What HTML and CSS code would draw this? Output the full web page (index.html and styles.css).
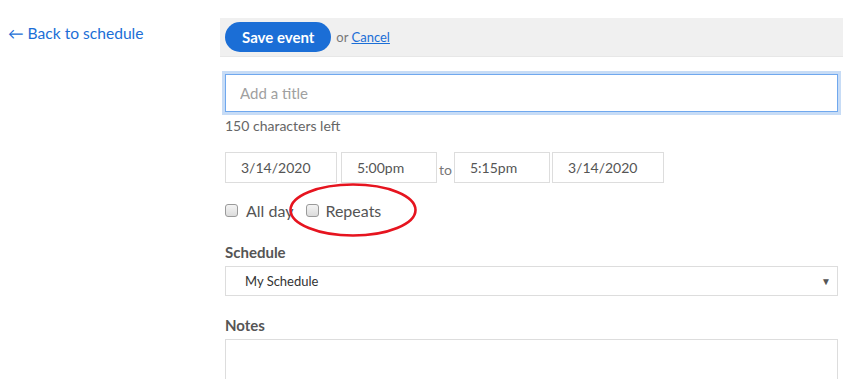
FILE: index.html
```html
<!DOCTYPE html>
<html lang="en">
<head>
  <meta charset="UTF-8">
  <title>New Event</title>
  <link rel="stylesheet" href="styles.css">
</head>
<body>
  <div class="page">
    <!-- Left column -->
    <div class="sidebar">
      <a href="#" class="back-link">&larr; Back to schedule</a>
    </div>

    <!-- Event form -->
    <div class="main">
      <div class="toolbar">
        <button type="submit" class="save-btn">Save event</button>
        <span class="or">or <a href="#">Cancel</a></span>
      </div>

      <form class="event-form">
        <input type="text" class="title-input" placeholder="Add a title">
        <div class="hint">150 characters left</div>

        <div class="date-row">
          <input type="text" class="date" value="3/14/2020">
          <input type="text" class="time" value="5:00pm">
          <span class="to">to</span>
          <input type="text" class="time" value="5:15pm">
          <input type="text" class="date" value="3/14/2020">
        </div>

        <div class="check-row">
          <label class="check"><input type="checkbox"> All day</label>
          <label class="check"><input type="checkbox"> Repeats</label>
          <svg class="circle-mark" width="132" height="58" viewBox="0 0 132 58">
            <ellipse cx="66" cy="29" rx="62.5" ry="25.5" fill="none" stroke="#e6141f" stroke-width="2.6"/>
          </svg>
        </div>

        <label class="field-label first">Schedule</label>
        <div class="select-box">
          <span>My Schedule</span>
          <span class="arrow">&#9660;</span>
        </div>

        <label class="field-label">Notes</label>
        <textarea class="notes"></textarea>
      </form>
    </div>
  </div>
</body>
</html>
```

FILE: styles.css
```css
body {
  margin: 0;
  font-family: Lato, "Open Sans", Arial, sans-serif;
  color: #555;
  background: white;
}

.page {
  display: flex;
}

.sidebar {
  width: 212px;
  padding: 23px 0 0 8px;
}

.back-link {
  color: #1b6ed6;
  text-decoration: none;
  font-size: 15.6px;
  line-height: 19px;
}

.main {
  width: 623px;
  margin-top: 18px;
}

.toolbar {
  display: flex;
  align-items: center;
  height: 38px;
  padding-left: 5px;
  background: #f0f0f0;
  border-bottom: 1px solid #e7e7e7;
}

.save-btn {
  height: 30px;
  padding: 0 17px;
  background-color: #1b6ed6;
  color: white;
  border: none;
  border-radius: 15px;
  font-family: inherit;
  font-size: 15px;
  font-weight: bold;
  cursor: pointer;
}

.or {
  margin-left: 5px;
  font-size: 13px;
  color: #777;
}

.or a {
  color: #1b6ed6;
}

.event-form {
  display: flex;
  flex-direction: column;
  align-items: flex-start;
  padding: 0 5px;
}

.title-input {
  box-sizing: border-box;
  width: 613px;
  height: 38px;
  margin-top: 17px;
  padding: 0 14px;
  border: 1px solid #70a8ee;
  box-shadow: 0 0 0 3px #c7dcf6;
  outline: none;
  font-family: inherit;
  font-size: 15px;
  color: #333;
}

.title-input::placeholder {
  color: #a0a0a0;
}

.hint {
  margin-top: 5px;
  font-size: 14px;
  line-height: 17px;
  color: #666;
}

.date-row {
  display: flex;
  align-items: center;
  margin-top: 18px;
}

.date-row input {
  box-sizing: border-box;
  height: 31px;
  padding: 0 15px;
  border: 1px solid #ddd;
  font-family: inherit;
  font-size: 14px;
  color: #555;
}

.date {
  width: 112px;
}

.time {
  width: 96px;
  margin-left: 4px;
}

.date-row .time + .date {
  margin-left: 2px;
}

.to {
  margin: 4px 2px 0 2px;
  font-size: 14px;
  color: #777;
}

.date-row .to + .time {
  margin-left: 0;
}

.check-row {
  position: relative;
  display: flex;
  align-items: center;
  height: 22px;
  margin-top: 16px;
}

.check {
  display: flex;
  align-items: center;
  margin-right: 13px;
  font-size: 16px;
  color: #555;
}

.check input {
  appearance: none;
  box-sizing: border-box;
  width: 13px;
  height: 13px;
  margin: 0 8px 0 0;
  border: 1px solid #9a9a9a;
  border-radius: 3px;
  background: linear-gradient(#f4f4f4, #dcdcdc);
}

.check + .check input {
  margin-right: 6px;
}

.circle-mark {
  position: absolute;
  left: 62px;
  top: -18px;
}

.field-label {
  margin-top: 20px;
  font-size: 15px;
  font-weight: bold;
  line-height: 18px;
  color: #555;
}

.field-label.first {
  margin-top: 22px;
}

.select-box {
  box-sizing: border-box;
  display: flex;
  align-items: center;
  justify-content: space-between;
  width: 613px;
  height: 30px;
  margin-top: 5px;
  padding: 0 6px 0 19px;
  border: 1px solid #ddd;
  font-size: 13px;
  color: #333;
}

.arrow {
  font-size: 10px;
  color: #555;
}

.notes {
  box-sizing: border-box;
  width: 613px;
  height: 80px;
  margin-top: 5px;
  border: 1px solid #ddd;
  resize: none;
}
```
